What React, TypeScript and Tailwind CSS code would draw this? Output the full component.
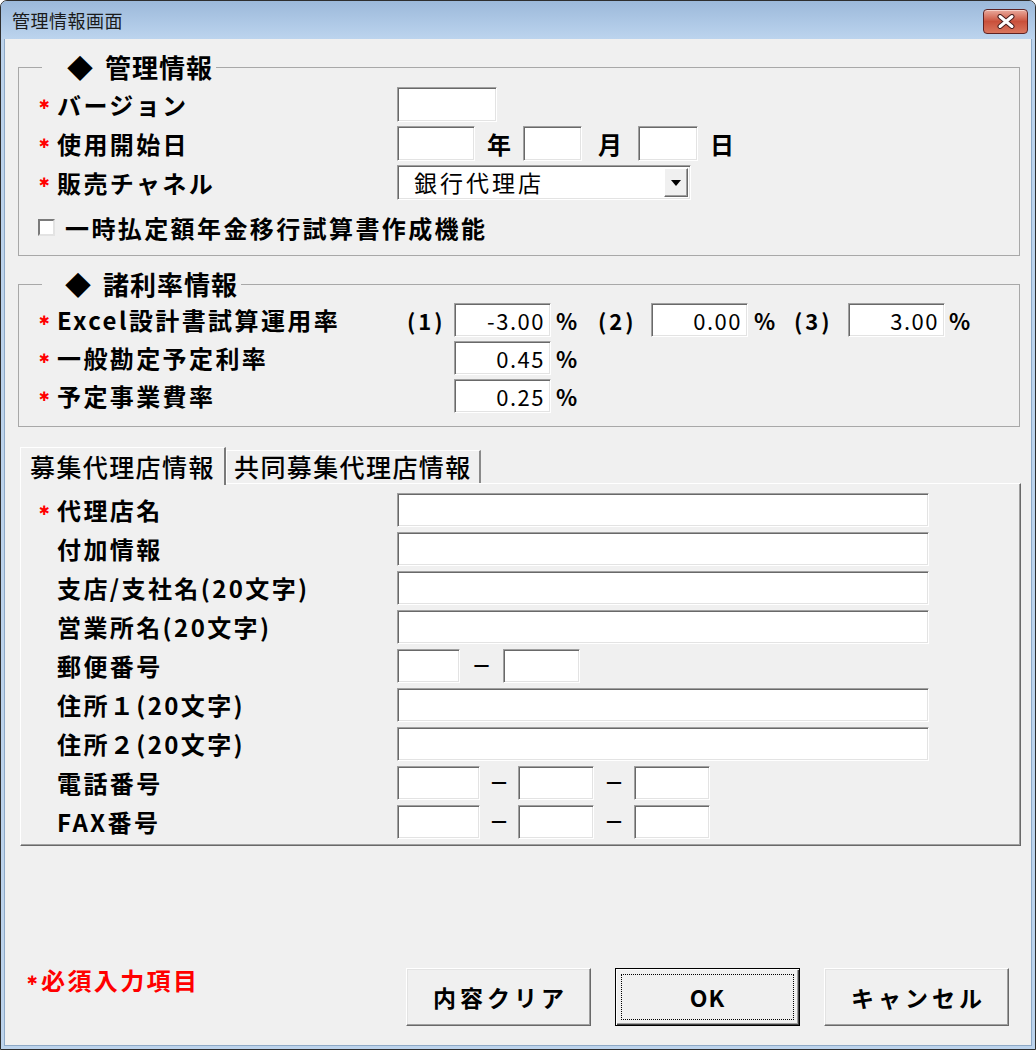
import type { ReactNode } from 'react';

const FONT = "font-['Noto_Sans_CJK_JP','Noto_Sans',sans-serif]";

function Sunken({ className = '', children }: { className?: string; children?: ReactNode }) {
  return (
    <div className={`bg-white border border-t-[#a0a0a0] border-l-[#a0a0a0] border-r-white border-b-white shadow-[inset_1px_1px_0_#696969,inset_-1px_-1px_0_#e3e3e3] ${className}`}>
      {children}
    </div>
  );
}

function Req({ on = true }: { on?: boolean }) {
  return (
    <span className="w-[19px] shrink-0 pl-[1px] font-['DejaVu_Sans',sans-serif] text-[13px] font-bold text-[#ff0000] leading-none">
      {on ? '✱' : ''}
    </span>
  );
}

function Label({ className = '', children }: { className?: string; children: ReactNode }) {
  return (
    <span className={`shrink-0 text-[24px] font-bold tracking-[2.4px] leading-none whitespace-nowrap ${className}`}>{children}</span>
  );
}

function Num({ value }: { value: string }) {
  return (
    <Sunken className="w-[97px] h-[34px] flex items-center justify-end pr-[5px] text-[22px] tracking-[1.5px] leading-none">
      {value}
    </Sunken>
  );
}

function Dash({ className = '' }: { className?: string }) {
  return <span className={`shrink-0 text-center text-[20px] font-bold leading-none ${className}`}>－</span>;
}

function CloseButton() {
  return (
    <div className="w-[45px] h-[25px] mt-[2px] rounded-[4px] border border-[#5e2222] bg-linear-to-b from-[#e9a99d] via-[#c9503b] to-[#d9765f] flex items-center justify-center shadow-[inset_0_1px_0_#f6d0c8]">
      <svg width="20" height="15" viewBox="0 0 20 15">
        <path d="M4 2.5 L16 12.5 M16 2.5 L4 12.5" stroke="#4a1e1e" strokeWidth="5" strokeLinecap="round" />
        <path d="M4 2.5 L16 12.5 M16 2.5 L4 12.5" stroke="#ffffff" strokeWidth="3" strokeLinecap="round" />
      </svg>
    </div>
  );
}

function Button({ children, focused = false }: { children: ReactNode; focused?: boolean }) {
  const edge = focused
    ? 'border border-black shadow-[inset_1px_1px_0_#fff,inset_-1px_-1px_0_#404040,inset_-2px_-2px_0_#a0a0a0]'
    : 'border border-t-white border-l-white border-r-[#696969] border-b-[#696969] shadow-[inset_-1px_-1px_0_#a0a0a0,inset_1px_1px_0_#e3e3e3]';
  return (
    <div className={`relative w-[185px] h-[58px] bg-[#f0f0f0] flex items-center justify-center text-[23px] font-bold leading-none ${edge}`}>
      {focused && <span className="absolute inset-[5px] border border-dotted border-black" />}
      {children}
    </div>
  );
}

export default function App() {
  return (
    <div className={`w-[1036px] h-[1050px] ${FONT} text-black bg-white`}>
      <div className="w-full h-full flex flex-col border border-[#2e2e2e] rounded-t-[7px] overflow-hidden bg-[#bcd3ec]">
        {/* Title bar */}
        <div className="h-[38px] shrink-0 flex items-center justify-between pl-[11px] pr-[7px] bg-linear-to-b from-[#9cb9da] to-[#bcd4ee]">
          <span className="text-[18px] tracking-[0.5px] leading-none text-[#1a1a1a]">管理情報画面</span>
          <CloseButton />
        </div>

        <div className="flex-1 flex flex-col mx-[3px] mb-[3px] bg-[#f0f0f0] border-l border-r border-b border-[#8ea9c6]">
          {/* 管理情報 */}
          <fieldset className="ml-[13px] mt-[13px] w-[1002px] border border-[#a8a8a8] pl-[19px] pt-[5px] pb-[10px]">
            <legend className="ml-[4px] pl-[25px] pr-[3px] text-[26px] font-bold leading-[30px] tracking-[1px]">
              <span className="mr-[11px]">◆</span>管理情報
            </legend>
            <div className="flex flex-col gap-[4px]">
              <div className="flex items-center h-[35px]">
                <Req />
                <Label className="w-[340px]">バージョン</Label>
                <Sunken className="w-[100px] h-[35px]" />
              </div>
              <div className="flex items-center h-[35px]">
                <Req />
                <Label className="w-[340px]">使用開始日</Label>
                <Sunken className="w-[78px] h-[35px]" />
                <Label className="w-[48px] text-center tracking-normal">年</Label>
                <Sunken className="w-[59px] h-[35px]" />
                <Label className="w-[56px] text-center tracking-normal">月</Label>
                <Sunken className="w-[60px] h-[35px]" />
                <Label className="ml-[12px] tracking-normal">日</Label>
              </div>
              <div className="flex items-center h-[35px]">
                <Req />
                <Label className="w-[340px]">販売チャネル</Label>
                <Sunken className="w-[294px] h-[35px] flex items-center justify-between pl-[16px] pr-[2px]">
                  <span className="text-[23px] tracking-[3px] leading-none">銀行代理店</span>
                  <span className="w-[24px] h-[29px] bg-[#f0f0f0] border border-t-white border-l-white border-r-[#696969] border-b-[#696969] shadow-[inset_-1px_-1px_0_#a0a0a0] flex items-center justify-center">
                    <svg width="10" height="6" viewBox="0 0 10 6">
                      <path d="M0 0 H10 L5 6 Z" fill="#000" />
                    </svg>
                  </span>
                </Sunken>
              </div>
              <div className="flex items-center h-[35px] mt-[6px]">
                <span className="block shrink-0 w-[17px] h-[17px] bg-white border-2 border-t-[#7a7a7a] border-l-[#7a7a7a] border-r-[#e3e3e3] border-b-[#e3e3e3]" />
                <Label className="ml-[10px]">一時払定額年金移行試算書作成機能</Label>
              </div>
            </div>
          </fieldset>

          {/* 諸利率情報 */}
          <fieldset className="ml-[13px] mt-[13px] w-[1002px] border border-[#a8a8a8] pl-[19px] pt-[4px] pb-[13px]">
            <legend className="ml-[4px] pl-[23px] pr-[3px] text-[26px] font-bold leading-[30px] tracking-[1px]">
              <span className="mr-[11px]">◆</span>諸利率情報
            </legend>
            <div className="flex flex-col gap-[4px]">
              <div className="flex items-center h-[34px]">
                <Req />
                <Label className="w-[350px]">Excel設計書試算運用率</Label>
                <span className="w-[47px] shrink-0 text-[22px] font-bold tracking-[3px] leading-none">(1)</span>
                <Num value="-3.00" />
                <span className="w-[47px] shrink-0 pl-[5px] text-[22px] font-bold leading-none">%</span>
                <span className="w-[53px] shrink-0 text-[22px] font-bold tracking-[3px] leading-none">(2)</span>
                <Num value="0.00" />
                <span className="w-[46px] shrink-0 pl-[6px] text-[22px] font-bold leading-none">%</span>
                <span className="w-[54px] shrink-0 text-[22px] font-bold tracking-[3px] leading-none">(3)</span>
                <Num value="3.00" />
                <span className="shrink-0 pl-[4px] text-[22px] font-bold leading-none">%</span>
              </div>
              <div className="flex items-center h-[34px]">
                <Req />
                <Label className="w-[350px]">一般勘定予定利率</Label>
                <span className="w-[47px] shrink-0" />
                <Num value="0.45" />
                <span className="shrink-0 pl-[5px] text-[22px] font-bold leading-none">%</span>
              </div>
              <div className="flex items-center h-[34px]">
                <Req />
                <Label className="w-[350px]">予定事業費率</Label>
                <span className="w-[47px] shrink-0" />
                <Num value="0.25" />
                <span className="shrink-0 pl-[5px] text-[22px] font-bold leading-none">%</span>
              </div>
            </div>
          </fieldset>

          {/* Tabs */}
          <div className="ml-[15px] mt-[20px] flex items-end h-[36px]">
            <div className="relative z-10 h-[38px] -mb-[2px] w-[206px] bg-[#f0f0f0] border-t border-l border-t-white border-l-white border-r-2 border-r-[#7a7a7a] pl-[9px] pt-[3px] text-[25px] tracking-[1.4px] font-medium leading-[30px] whitespace-nowrap">
              募集代理店情報
            </div>
            <div className="h-[33px] w-[255px] bg-[#f0f0f0] border-t border-l border-t-white border-l-white border-r-2 border-r-[#8a8a8a] pl-[7px] text-[25px] tracking-[1.4px] font-medium leading-[30px] whitespace-nowrap">
              共同募集代理店情報
            </div>
          </div>
          <div className="ml-[15px] w-[1001px] h-[363px] bg-[#f0f0f0] border border-t-white border-l-white border-r-[#696969] border-b-[#696969] shadow-[inset_-1px_-1px_0_#a0a0a0] pl-[17px] pt-[9px] flex flex-col gap-[5px]">
            <div className="flex items-center h-[34px]">
              <Req />
              <Label className="w-[340px]">代理店名</Label>
              <Sunken className="w-[532px] h-[34px]" />
            </div>
            <div className="flex items-center h-[34px]">
              <Req on={false} />
              <Label className="w-[340px]">付加情報</Label>
              <Sunken className="w-[532px] h-[34px]" />
            </div>
            <div className="flex items-center h-[34px]">
              <Req on={false} />
              <Label className="w-[340px]">支店/支社名(20文字)</Label>
              <Sunken className="w-[532px] h-[34px]" />
            </div>
            <div className="flex items-center h-[34px]">
              <Req on={false} />
              <Label className="w-[340px]">営業所名(20文字)</Label>
              <Sunken className="w-[532px] h-[34px]" />
            </div>
            <div className="flex items-center h-[34px]">
              <Req on={false} />
              <Label className="w-[340px]">郵便番号</Label>
              <Sunken className="w-[63px] h-[34px]" />
              <Dash className="w-[43px]" />
              <Sunken className="w-[77px] h-[34px]" />
            </div>
            <div className="flex items-center h-[34px]">
              <Req on={false} />
              <Label className="w-[340px]">住所１(20文字)</Label>
              <Sunken className="w-[532px] h-[34px]" />
            </div>
            <div className="flex items-center h-[34px]">
              <Req on={false} />
              <Label className="w-[340px]">住所２(20文字)</Label>
              <Sunken className="w-[532px] h-[34px]" />
            </div>
            <div className="flex items-center h-[34px]">
              <Req on={false} />
              <Label className="w-[340px]">電話番号</Label>
              <Sunken className="w-[83px] h-[34px]" />
              <Dash className="w-[38px]" />
              <Sunken className="w-[76px] h-[34px]" />
              <Dash className="w-[40px]" />
              <Sunken className="w-[76px] h-[34px]" />
            </div>
            <div className="flex items-center h-[34px]">
              <Req on={false} />
              <Label className="w-[340px]">FAX番号</Label>
              <Sunken className="w-[83px] h-[34px]" />
              <Dash className="w-[38px]" />
              <Sunken className="w-[76px] h-[34px]" />
              <Dash className="w-[40px]" />
              <Sunken className="w-[76px] h-[34px]" />
            </div>
          </div>

          {/* Footer */}
          <div className="ml-[20px] mt-[122px] flex items-start">
            <span className="w-[381px] shrink-0 flex items-center h-[24px] text-[#ff0000] font-bold leading-none">
              <span className="w-[16px] pl-[2px] font-['DejaVu_Sans',sans-serif] text-[13px]">✱</span>
              <span className="text-[24px] tracking-[2.4px]">必須入力項目</span>
            </span>
            <div className="flex gap-[24px]">
              <Button>
                <span className="pl-[4px] tracking-[4px]">内容クリア</span>
              </Button>
              <Button focused>
                <span className="tracking-[1px]">OK</span>
              </Button>
              <Button>
                <span className="pl-[4px] tracking-[4px]">キャンセル</span>
              </Button>
            </div>
          </div>
        </div>
      </div>
    </div>
  );
}
